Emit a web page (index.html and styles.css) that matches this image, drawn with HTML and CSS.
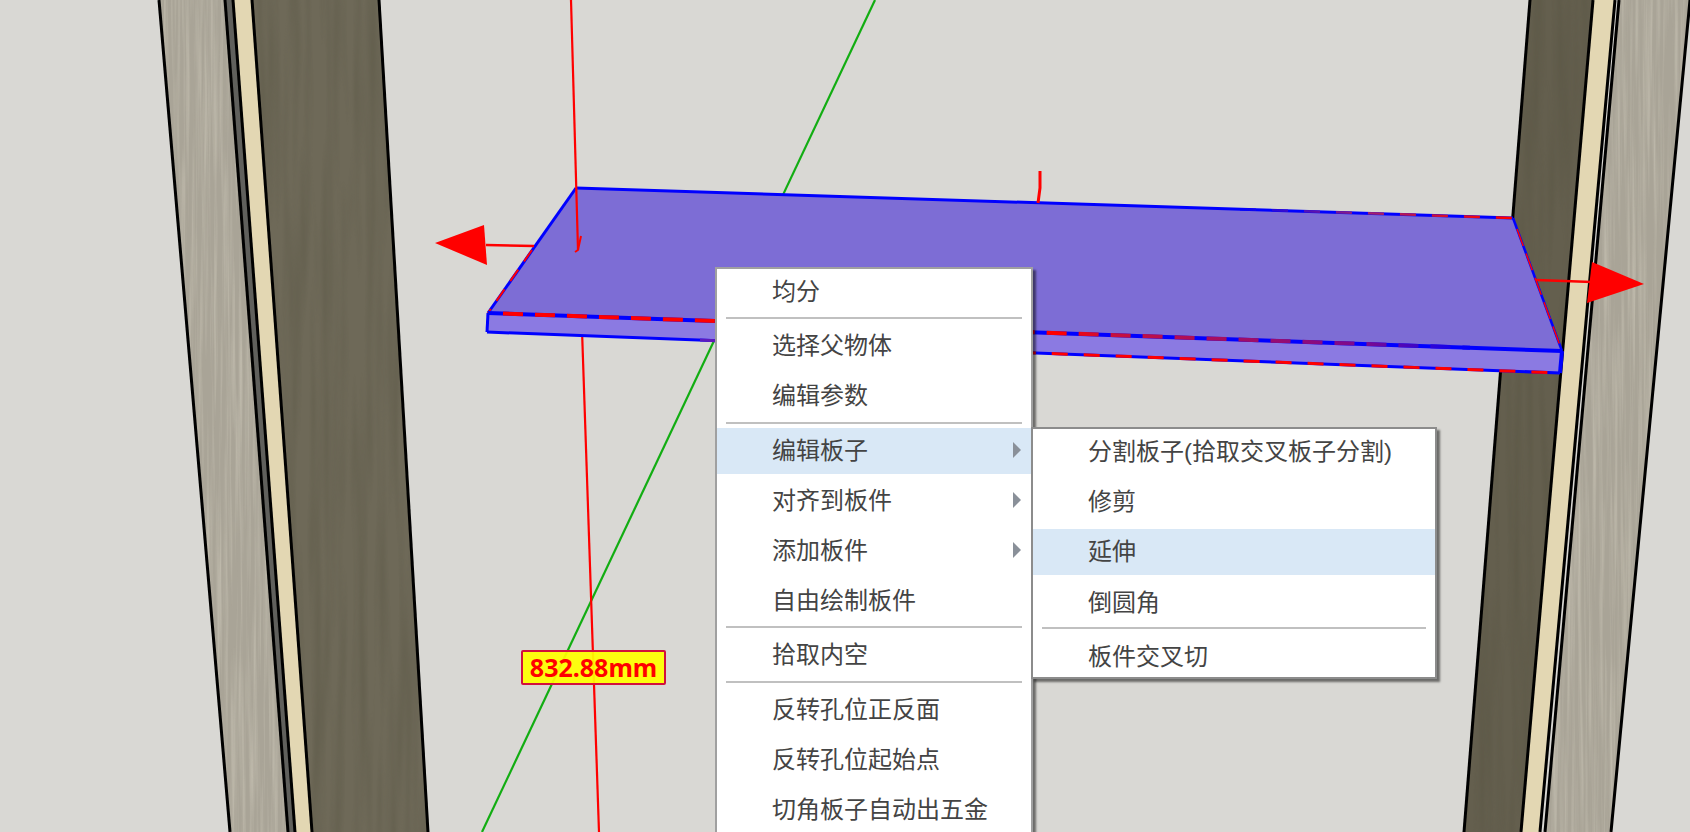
FILE: index.html
```html
<!DOCTYPE html>
<html lang="zh-CN">
<head>
  <meta charset="UTF-8">
  <meta name="viewport" content="width=device-width, initial-scale=1.0">
  <link rel="stylesheet" href="styles.css">
  <title>板件编辑</title>
</head>
<body>
  <div class="viewport">
    <svg class="scene" width="1690" height="832" viewBox="0 0 1690 832">
      <defs>
        <filter id="grain-light" x="0" y="0" width="1" height="1" color-interpolation-filters="sRGB">
          <feTurbulence type="fractalNoise" baseFrequency="0.28 0.006" numOctaves="3" seed="7"/>
          <feColorMatrix type="matrix" values="0 0 0 0 0.86  0 0 0 0 0.84  0 0 0 0 0.78  0.9 0 0 0 -0.36"/>
          <feComposite in2="SourceAlpha" operator="in" result="streak"/>
          <feMerge>
            <feMergeNode in="SourceGraphic"/>
            <feMergeNode in="streak"/>
          </feMerge>
        </filter>
        <filter id="grain-dark" x="0" y="0" width="1" height="1" color-interpolation-filters="sRGB">
          <feTurbulence type="fractalNoise" baseFrequency="0.09 0.005" numOctaves="2" seed="3"/>
          <feColorMatrix type="matrix" values="0 0 0 0 0.3  0 0 0 0 0.29  0 0 0 0 0.22  0.6 0 0 0 -0.24"/>
          <feComposite in2="SourceAlpha" operator="in" result="streak"/>
          <feMerge>
            <feMergeNode in="SourceGraphic"/>
            <feMergeNode in="streak"/>
          </feMerge>
        </filter>
        <linearGradient id="front-dash" gradientUnits="userSpaceOnUse" x1="1060" y1="0" x2="1470" y2="0">
          <stop offset="0" stop-color="#f00"/>
          <stop offset="0.12" stop-color="#c8103c"/>
          <stop offset="0.75" stop-color="#7a0a90"/>
          <stop offset="1" stop-color="#00f"/>
        </linearGradient>
        <linearGradient id="back-dash" gradientUnits="userSpaceOnUse" x1="1240" y1="0" x2="1500" y2="0">
          <stop offset="0" stop-color="#00f"/>
          <stop offset="0.5" stop-color="#a02070"/>
          <stop offset="1" stop-color="#f00"/>
        </linearGradient>
        <linearGradient id="bottom-dash" gradientUnits="userSpaceOnUse" x1="700" y1="0" x2="1040" y2="0">
          <stop offset="0" stop-color="#5a1ac0"/>
          <stop offset="1" stop-color="#f00"/>
        </linearGradient>
      </defs>

      <!-- left post -->
      <polygon points="159,0 225,0 288,832 230,832" fill="#a9a497" filter="url(#grain-light)"/>
      <polygon points="225,0 233,0 295,832 288,832" fill="#60605c"/>
      <polygon points="233,0 252,0 312,832 295,832" fill="#e3d7b3"/>
      <polygon points="252,0 379,0 428,832 312,832" fill="#6e6958" filter="url(#grain-dark)"/>
      <g stroke="#000" stroke-width="3">
        <line x1="159" y1="0" x2="230" y2="832"/>
        <line x1="225" y1="0" x2="288" y2="832"/>
        <line x1="233" y1="0" x2="295" y2="832"/>
        <line x1="252" y1="0" x2="312" y2="832"/>
        <line x1="379" y1="0" x2="428" y2="832"/>
      </g>

      <!-- right post -->
      <polygon points="1530,0 1593,0 1521,832 1464,832" fill="#645f4e" filter="url(#grain-dark)"/>
      <polygon points="1593,0 1615,0 1540,832 1521,832" fill="#e3d7b3"/>
      <polygon points="1619,0 1690,0 1611,832 1545,832" fill="#a9a497" filter="url(#grain-light)"/>
      <g stroke="#000" stroke-width="3">
        <line x1="1530" y1="0" x2="1464" y2="832"/>
        <line x1="1593" y1="0" x2="1521" y2="832"/>
        <line x1="1615" y1="0" x2="1540" y2="832"/>
        <line x1="1619" y1="0" x2="1545" y2="832"/>
        <line x1="1690" y1="0" x2="1611" y2="832"/>
      </g>

      <!-- axes behind the panel -->
      <line x1="875" y1="0" x2="482" y2="832" stroke="#12ad12" stroke-width="2.2"/>
      <line x1="582" y1="330" x2="599" y2="832" stroke="#f00" stroke-width="2.2"/>

      <!-- panel -->
      <polygon points="576,188 1513,218 1562,351 488,313" fill="#7d6dd5"/>
      <polygon points="488,313 1562,351 1560,373 487,332" fill="#8b7ae2"/>

      <g fill="none" stroke-linecap="butt">
        <line x1="576" y1="188" x2="1513" y2="218" stroke="#00f" stroke-width="3"/>
        <line x1="1240" y1="209.2" x2="1513" y2="218" stroke="url(#back-dash)" stroke-width="2.5" stroke-dasharray="16 16"/>
        <line x1="576" y1="188" x2="488" y2="313" stroke="#00f" stroke-width="3"/>
        <line x1="532" y1="250" x2="488" y2="313" stroke="#f00" stroke-width="2" stroke-dasharray="14 10"/>
        <line x1="1513" y1="218" x2="1562" y2="351" stroke="#00f" stroke-width="2.5"/>
        <line x1="1517" y1="229" x2="1562" y2="351" stroke="#f00" stroke-width="1.5" stroke-dasharray="18 8"/>
        <line x1="488" y1="313" x2="1562" y2="351" stroke="#00f" stroke-width="4"/>
        <line x1="503" y1="313.5" x2="1470" y2="347.7" stroke="url(#front-dash)" stroke-width="4" stroke-dasharray="20 12"/>
        <line x1="488" y1="313" x2="487" y2="332" stroke="#00f" stroke-width="3"/>
        <line x1="1562" y1="351" x2="1560" y2="373" stroke="#00f" stroke-width="4"/>
        <line x1="487" y1="332" x2="1560" y2="373" stroke="#00f" stroke-width="3"/>
        <line x1="700" y1="340.1" x2="1560" y2="373" stroke="url(#bottom-dash)" stroke-width="3" stroke-dasharray="16 16"/>
      </g>

      <!-- axes in front of the panel -->
      <polyline points="571,0 578,250" fill="none" stroke="#f00" stroke-width="2.2"/>
      <polyline points="581,236 578,250 575,252" fill="none" stroke="#f00" stroke-width="2"/>
      <polyline points="1040,171 1040,188 1038,203" fill="none" stroke="#f00" stroke-width="3"/>

      <line x1="486" y1="245" x2="534" y2="246" stroke="#f00" stroke-width="2.5"/>
      <polygon points="435,243 484,225 487,265" fill="#f00"/>
      <line x1="1536" y1="280" x2="1592" y2="282" stroke="#f00" stroke-width="2.5"/>
      <polygon points="1644,284 1592,262 1587,303" fill="#f00"/>
    </svg>

    <div class="dimension">832.88mm</div>

    <ul class="menu menu-main">
      <li class="menu-item">均分</li>
      <li class="menu-sep"></li>
      <li class="menu-item">选择父物体</li>
      <li class="menu-item">编辑参数</li>
      <li class="menu-sep"></li>
      <li class="menu-item has-sub active">编辑板子</li>
      <li class="menu-item has-sub">对齐到板件</li>
      <li class="menu-item has-sub">添加板件</li>
      <li class="menu-item">自由绘制板件</li>
      <li class="menu-sep"></li>
      <li class="menu-item">拾取内空</li>
      <li class="menu-sep"></li>
      <li class="menu-item">反转孔位正反面</li>
      <li class="menu-item">反转孔位起始点</li>
      <li class="menu-item">切角板子自动出五金</li>
    </ul>

    <ul class="menu menu-sub">
      <li class="menu-item">分割板子(拾取交叉板子分割)</li>
      <li class="menu-item">修剪</li>
      <li class="menu-item active">延伸</li>
      <li class="menu-item">倒圆角</li>
      <li class="menu-sep"></li>
      <li class="menu-item last">板件交叉切</li>
    </ul>
  </div>
</body>
</html>
```

FILE: styles.css
```css
html, body {
  margin: 0;
  padding: 0;
  height: 100%;
  overflow: hidden;
}

body {
  font-family: "Liberation Sans", "Noto Sans CJK SC", sans-serif;
  background-color: #d9d8d4;
}

.viewport {
  position: relative;
  width: 1690px;
  height: 832px;
  overflow: hidden;
}

.scene {
  display: block;
}

.dimension {
  position: absolute;
  left: 521px;
  top: 650px;
  width: 145px;
  height: 35px;
  box-sizing: border-box;
  border: 2px solid #d2103c;
  border-radius: 2px;
  background-color: rgba(255, 255, 0, 0.93);
  color: #f00;
  font-family: "Noto Sans", sans-serif;
  font-size: 25px;
  font-weight: bold;
  line-height: 31px;
  text-align: center;
}

.menu {
  position: absolute;
  margin: 0;
  padding: 0;
  list-style: none;
  box-sizing: border-box;
  border: 2px solid #a0a0a0;
  background-color: #fff;
  box-shadow: 3px 3px 2px rgba(0, 0, 0, 0.5);
  color: #444;
  font-size: 24px;
}

.menu-main {
  left: 715px;
  top: 267px;
  width: 318px;
  height: 600px;
}

.menu-sub {
  left: 1031px;
  top: 427px;
  width: 406px;
  height: 252px;
  border-color: #8c8c8c;
}

.menu-item {
  position: relative;
  height: 46px;
  margin-bottom: 4.2px;
  padding-left: 55px;
  line-height: 46px;
  white-space: nowrap;
}

.menu-item.last {
  height: 44px;
  margin-bottom: 0;
}

.menu-item.active {
  background-color: #d9e8f6;
}

.menu-sep {
  height: 2px;
  margin: -2px 9px 4px 9px;
  background-color: #c0c0c0;
}

.menu-sub .menu-sep {
  margin-top: -3px;
  margin-bottom: 5px;
}

.has-sub::after {
  content: "";
  position: absolute;
  right: 10px;
  top: 14px;
  border-left: 8px solid #8a9099;
  border-top: 8px solid transparent;
  border-bottom: 8px solid transparent;
}
```
